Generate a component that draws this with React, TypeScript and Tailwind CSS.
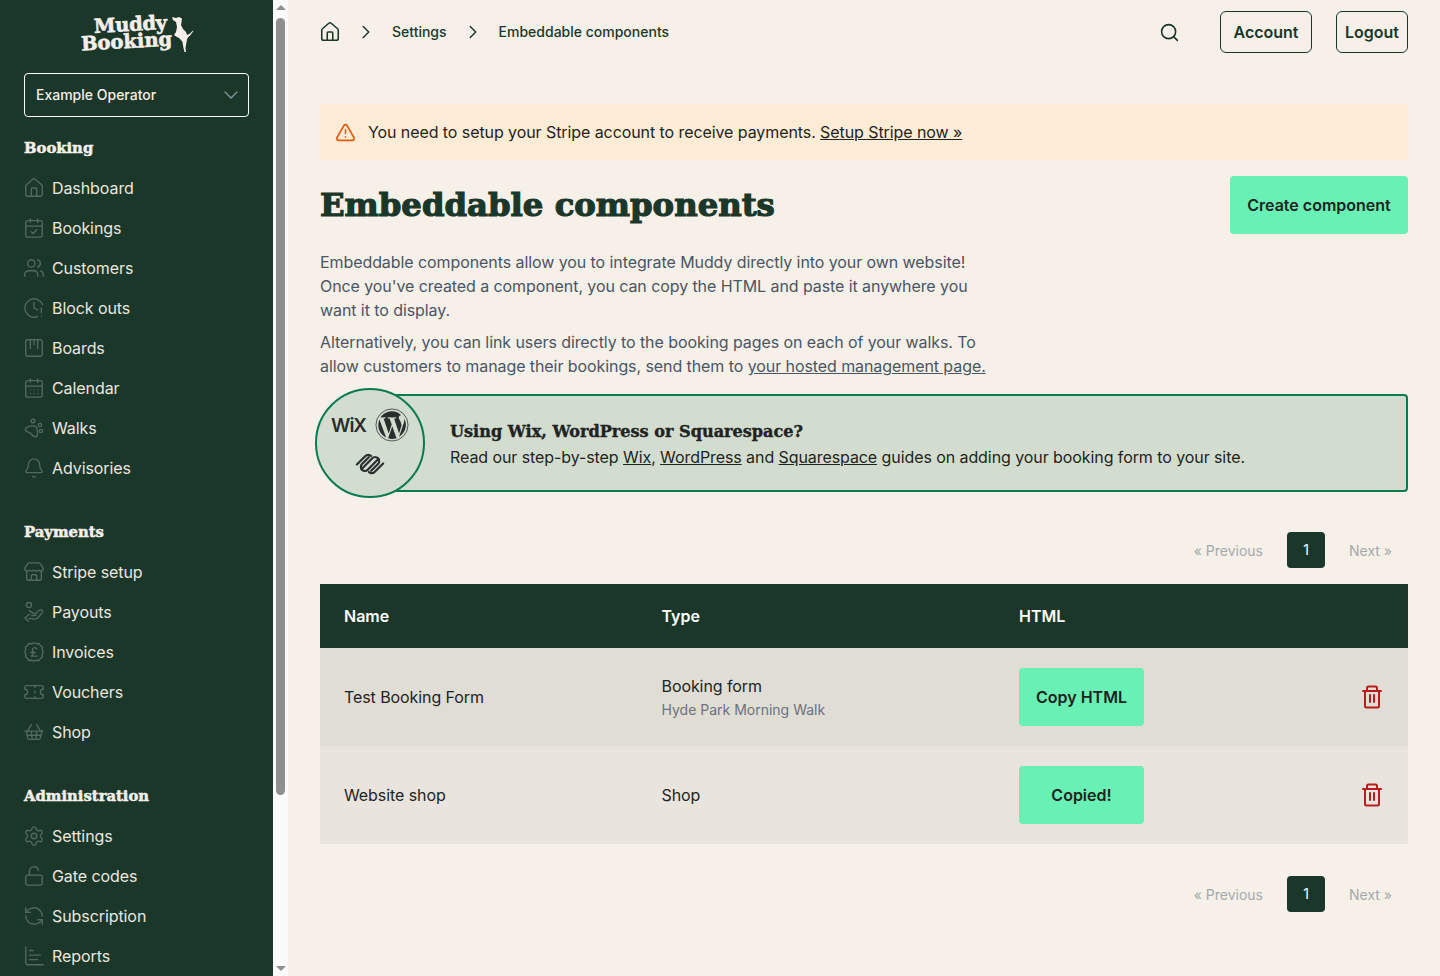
import {
  House,
  CalendarCheck,
  Users,
  ClockAlert,
  CalendarDays,
  Bell,
  Store,
  Ticket,
  ShoppingBasket,
  Settings,
  LockOpen,
  RefreshCcw,
  TriangleAlert,
  Search,
  ChevronRight,
  ChevronDown,
} from "lucide-react";

const SERIF = "font-['DejaVu_Serif',serif] font-bold";

type IconProps = { className?: string; strokeWidth?: number };

const WalksIcon = ({ className }: IconProps) => (
  <svg viewBox="0 0 24 24" fill="none" stroke="currentColor" strokeWidth="1.5" className={className}>
    <circle cx="10.900" cy="4.400" r="2" />
    <circle cx="18.500" cy="8.700" r="1.800" />
    <circle cx="19.600" cy="15.300" r="1.800" />
    <path d="M4 11.500C7 9.500 12 9 14 10.500c2 1.500 2.500 8.500 1 10.500-1.500 1.500-4.500 0-6-2.500-1.500-2.500-6-1.500-6.500-4.500-.2-1 .5-2 1.500-2.500z" />
  </svg>
);

const BoardIcon = ({ className }: IconProps) => (
  <svg viewBox="0 0 24 24" fill="none" stroke="currentColor" strokeWidth="1.5" strokeLinecap="round" className={className}>
    <rect x="3" y="3" width="18" height="18" rx="2" />
    <path d="M8 3.500v9M12 3.500v5M16 3.500v9" />
  </svg>
);

const PayoutIcon = ({ className }: IconProps) => (
  <svg viewBox="0 0 24 24" fill="none" stroke="currentColor" strokeWidth="1.5" strokeLinecap="round" strokeLinejoin="round" className={className}>
    <circle cx="6.500" cy="4.400" r="2.800" />
    <path d="M7 10.500c2 1.500 3.500 3 6 3.500 1.500.300 1.500 2-.500 2H9.500" />
    <path d="M13 14l5-4c2-1.500 4.500.500 3 2.500l-4.500 5.500c-1.500 1.500-4 2-6 1.500l-4-.500" />
    <path d="M7 14.500l-5 4 4 3.500" />
  </svg>
);

const InvoiceIcon = ({ className }: IconProps) => (
  <svg viewBox="0 0 24 24" fill="none" stroke="currentColor" strokeWidth="1.5" strokeLinecap="round" strokeLinejoin="round" className={className}>
    <path d="M12 2l2.500 1 3-.300 1.500 2.300 2.300 1.500-.300 3L22 12l-1 2.500.300 3-2.300 1.500-1.500 2.300-3-.300L12 22l-2.500-1-3 .300L5 19l-2.300-1.500.300-3L2 12l1-2.500-.300-3L5 5l1.500-2.300 3 .300z" />
    <path d="M15 8.500c-.500-1.500-3.500-2-4.500 0-.700 1.500.500 3 .500 4.500 0 1.500-1 3-2 3.500h6.500M8.500 12.500h5" />
  </svg>
);

const ReportIcon = ({ className }: IconProps) => (
  <svg viewBox="0 0 24 24" fill="none" stroke="currentColor" strokeWidth="1.5" strokeLinecap="round" strokeLinejoin="round" className={className}>
    <path d="M3 2v18a1.500 1.500 0 0 0 1.500 1.500H22" />
    <path d="M7 16h9M7 11h12M7 6h4" />
  </svg>
);

const sections = [
  {
    title: "Booking",
    items: [
      { label: "Dashboard", icon: House },
      { label: "Bookings", icon: CalendarCheck },
      { label: "Customers", icon: Users },
      { label: "Block outs", icon: ClockAlert },
      { label: "Boards", icon: BoardIcon },
      { label: "Calendar", icon: CalendarDays },
      { label: "Walks", icon: WalksIcon },
      { label: "Advisories", icon: Bell },
    ],
  },
  {
    title: "Payments",
    items: [
      { label: "Stripe setup", icon: Store },
      { label: "Payouts", icon: PayoutIcon },
      { label: "Invoices", icon: InvoiceIcon },
      { label: "Vouchers", icon: Ticket },
      { label: "Shop", icon: ShoppingBasket },
    ],
  },
  {
    title: "Administration",
    items: [
      { label: "Settings", icon: Settings },
      { label: "Gate codes", icon: LockOpen },
      { label: "Subscription", icon: RefreshCcw },
      { label: "Reports", icon: ReportIcon },
    ],
  },
];

const Logo = () => (
  <div className="flex justify-center pt-[15px] h-[73px]">
    <div className="relative w-[112px] h-[38px] text-[#f6efe9]">
      <div className={`${SERIF} absolute left-[13px] top-px text-[19.500px] leading-[18px] -rotate-3 tracking-[-0.3px] [-webkit-text-stroke:0.6px_#f6efe9]`}>
        Muddy
      </div>
      <div className={`${SERIF} absolute left-0 top-[18px] text-[19.500px] leading-[18px] -rotate-3 tracking-normal [-webkit-text-stroke:0.6px_#f6efe9]`}>
        Booking
      </div>
      <svg viewBox="0 0 26 38" fill="currentColor" className="absolute left-[87px] top-0 w-[26px] h-[38px]">
        <path d="M4 2l4 1 3-1 3 1.500-.500 3.500-.500 3 2 4 3 3 1 3 3-1.500 3-3 .300.800-2.800 3.700-3 3-1 4-1 6 .500 4-1.500 0-1-4-1-6-1.500-2-2-2-2-1-3-2 2-3 1-5-1-5-3-2z" />
      </svg>
    </div>
  </div>
);

const Sidebar = () => (
  <div className="flex h-screen shrink-0 overflow-hidden">
    <aside className="w-[273px] bg-[#1b372a] px-6 text-[#f6efe9] overflow-hidden">
      <Logo />
      <div className="flex h-11 items-center justify-between rounded border border-white pl-[11px] pr-[5px] text-sm font-medium tracking-normal">
        Example Operator
        <ChevronDown strokeWidth={1.25} className="h-6 w-6 text-[#8b95a1]" />
      </div>
      <nav className="pt-[20px]">
        {sections.map((section) => (
          <div key={section.title} className="mb-[33px]">
            <h3 className={`${SERIF} text-[14.800px] leading-[22px] mb-[9px] tracking-normal [-webkit-text-stroke:0.5px_#f6efe9]`}>
              {section.title}
            </h3>
            {section.items.map((item) => (
              <div key={item.label} className="ml-[-1px] flex h-10 items-center gap-[7px]">
                <item.icon strokeWidth={1.5} className="h-[22px] w-[22px] text-[#54695e]" />
                <span className="text-base text-[#ebe6df]">{item.label}</span>
              </div>
            ))}
          </div>
        ))}
      </nav>
    </aside>
    <div className="relative flex w-[15px] flex-col items-center bg-[#fcfbfb]">
      <div className="mt-[5px] h-0 w-0 border-x-[5px] border-b-[5px] border-x-transparent border-b-[#8f8f8f]" />
      <div className="mt-[8px] h-[777px] w-[9px] rounded-full bg-[#8f8f8f]" />
      <div className="absolute bottom-[5px] h-0 w-0 border-x-[5px] border-t-[5px] border-x-transparent border-t-[#8f8f8f]" />
    </div>
  </div>
);

const Pagination = () => (
  <div className="flex h-9 items-center justify-end text-sm tracking-normal text-[#a3aaa9]">
    <span className="mr-6 mt-px">« Previous</span>
    <span className="flex h-9 w-[38px] items-center justify-center rounded bg-[#1b372a] text-white">1</span>
    <span className="ml-6 mr-4 mt-px">Next »</span>
  </div>
);

const TrashButton = () => (
  <svg viewBox="0 0 24 24" fill="none" stroke="currentColor" strokeWidth="2" strokeLinecap="round" strokeLinejoin="round" className="ml-auto mr-6 h-6 w-6 text-[#b91c1c]">
    <path d="M3 6h18" />
    <path d="M7 6V3a1.500 1.500 0 0 1 1.500-1.500h7A1.500 1.500 0 0 1 17 3v3" />
    <path d="M5 6v15a1.500 1.500 0 0 0 1.500 1.500h11a1.500 1.500 0 0 0 1.500-1.500V6" />
    <path d="M10 10v7M14 10v7" />
  </svg>
);

const CopyButton = ({ label }: { label: string }) => (
  <button className="h-[58px] w-[125px] rounded bg-[#69f0b4] font-semibold tracking-normal text-[#1f2421]">{label}</button>
);

const WordPress = () => (
  <svg viewBox="0 0 36 36" className="h-[34px] w-[34px]">
    <circle cx="18" cy="18" r="17" fill="none" stroke="#2a2f2d" strokeWidth="0.800" />
    <path
      fill="#2a2f2d"
      d="M3.500 18c0 5.800 3.300 10.800 8.200 13.100L4.700 12.100C3.900 13.900 3.500 15.900 3.500 18zM27.700 17.300c0-1.800-.700-3-1.200-3.900-.700-1.200-1.400-2.200-1.400-3.300 0-1.300 1-2.500 2.400-2.500h.200C25.100 5.100 21.700 3.500 18 3.500c-5 0-9.500 2.600-12.100 6.500h.900c1.500 0 3.900-.200 3.900-.200.800 0 .900 1.100.100 1.200 0 0-.800.100-1.700.100l5.400 16 3.200-9.700-2.300-6.300c-.800 0-1.500-.100-1.500-.100-.800 0-.700-1.300.100-1.200 0 0 2.400.200 3.900.200s3.900-.200 3.900-.200c.800 0 .900 1.100.100 1.200 0 0-.800.100-1.700.100l5.300 15.900 1.500-4.900c.600-1.900 1.100-3.300 1.100-4.500zM18.300 19.300l-4.400 12.800c1.300.400 2.700.600 4.100.600 1.700 0 3.300-.300 4.800-.800l-.100-.200zM30.900 11c.100.500.100 1 .100 1.500 0 1.500-.300 3.100-1.100 5.100l-4.400 12.800c4.300-2.500 7.200-7.200 7.200-12.400 0-2.500-.600-4.900-1.800-7z"
    />
  </svg>
);

const Squarespace = () => (
  <svg viewBox="0 0 28 24" fill="none" stroke="#2a2f2d" strokeWidth="1.900" strokeLinecap="round" className="h-7 w-8">
    <path d="M2.500 12.500L10 5a3.500 3.500 0 0 1 5 0M6.500 16.500L16 7a3.500 3.500 0 0 1 5 5l-6 6" />
    <path d="M25.500 11.500L18 19a3.500 3.500 0 0 1-5 0M21.500 7.500L12 17a3.500 3.500 0 0 1-5-5l6-6" />
  </svg>
);

export default function App() {
  return (
    <div className="flex h-screen overflow-hidden bg-[#f6f0e9] font-['Inter',sans-serif] tracking-[-0.08px] text-[#1f2421]">
      <Sidebar />
      <main className="flex-1 px-8 pt-[11px]">
        <header className="flex h-[42px] items-center text-[#1b372a]">
          <House strokeWidth={1.7} className="ml-[-1px] h-[22px] w-[22px]" />
          <ChevronRight strokeWidth={1.6} className="ml-[14px] h-[22px] w-[22px]" />
          <span className="ml-[15px] text-sm font-medium tracking-normal">Settings</span>
          <ChevronRight strokeWidth={1.6} className="ml-[15px] h-[22px] w-[22px]" />
          <span className="ml-[15px] text-sm font-medium tracking-normal">Embeddable components</span>
          <Search strokeWidth={1.8} className="ml-auto mr-[40px] h-[21px] w-[21px]" />
          <button className="h-[42px] w-[92px] rounded-md border border-[#1b372a] font-semibold tracking-normal">Account</button>
          <button className="ml-[24px] h-[42px] w-[72px] rounded-md border border-[#1b372a] font-semibold tracking-normal">Logout</button>
        </header>

        <div className="mt-[51px] flex h-14 items-center rounded bg-[#feecd6] pl-[15px]">
          <TriangleAlert strokeWidth={1.8} className="h-[21px] w-[21px] text-[#ea580c]" />
          <p className="ml-3">
            You need to setup your Stripe account to receive payments. <a className="underline">Setup Stripe now »</a>
          </p>
        </div>

        <div className="mt-4 flex h-[58px] items-center justify-between">
          <h1 className={`${SERIF} text-[32.300px] tracking-normal text-[#1b372a] [-webkit-text-stroke:1.2px_#1b372a]`}>
            Embeddable components
          </h1>
          <button className="h-[58px] w-[178px] rounded bg-[#69f0b4] font-semibold tracking-normal">Create component</button>
        </div>

        <div className="mt-4 w-[680px] text-[#4b5563]">
          <p>
            Embeddable components allow you to integrate Muddy directly into your own website! Once you've created a
            component, you can copy the HTML and paste it anywhere you want it to display.
          </p>
          <p className="mt-2">
            Alternatively, you can link users directly to the booking pages on each of your walks. To allow customers to
            manage their bookings, send them to <a className="underline">your hosted management page.</a>
          </p>
        </div>

        <div className="relative ml-[50px] mt-4 flex h-[98px] flex-col justify-center rounded border-2 border-[#0a7a50] bg-[#d2ddd0] pl-[78px] pt-[3px]">
          <div className="absolute left-[-57px] top-[-8px] flex h-[110px] w-[110px] flex-col items-center rounded-full border-2 border-[#0a7a50] bg-[#d2ddd0] pt-[18px]">
            <div className="flex items-center gap-[9px]">
              <span className="w-[35px] text-[19px] font-semibold leading-none tracking-[-1px] text-[#2a2f2d]">WiX</span>
              <WordPress />
            </div>
            <div className="mt-2">
              <Squarespace />
            </div>
          </div>
          <h2 className={`${SERIF} text-[16.100px] leading-6 tracking-normal [-webkit-text-stroke:0.4px_#1f2421]`}>
            Using Wix, WordPress or Squarespace?
          </h2>
          <p className="mt-px">
            Read our step-by-step <a className="underline">Wix</a>, <a className="underline">WordPress</a> and{" "}
            <a className="underline">Squarespace</a> guides on adding your booking form to your site.
          </p>
        </div>

        <div className="mt-10">
          <Pagination />
        </div>

        <table className="mt-4 w-full table-fixed border-collapse">
          <colgroup>
            <col className="w-[317.500px]" />
            <col className="w-[357.500px]" />
            <col />
            <col className="w-[100px]" />
          </colgroup>
          <thead>
            <tr className="h-16 bg-[#1b372a] text-left text-white">
              <th className="pl-6 font-semibold tracking-normal">Name</th>
              <th className="pl-6 font-semibold tracking-normal">Type</th>
              <th className="pl-6 font-semibold tracking-normal">HTML</th>
              <th />
            </tr>
          </thead>
          <tbody>
            <tr className="h-[98px] bg-[#e0ddd5]">
              <td className="pl-6">Test Booking Form</td>
              <td className="pl-6 pt-[2px]">
                <div>Booking form</div>
                <div className="text-sm leading-6 tracking-normal text-[#6b7280]">Hyde Park Morning Walk</div>
              </td>
              <td className="pl-6">
                <CopyButton label="Copy HTML" />
              </td>
              <td>
                <TrashButton />
              </td>
            </tr>
            <tr className="h-[98px] bg-[#e9e4dd]">
              <td className="pl-6">Website shop</td>
              <td className="pl-6">Shop</td>
              <td className="pl-6">
                <CopyButton label="Copied!" />
              </td>
              <td>
                <TrashButton />
              </td>
            </tr>
          </tbody>
        </table>

        <div className="mt-8">
          <Pagination />
        </div>
      </main>
    </div>
  );
}
